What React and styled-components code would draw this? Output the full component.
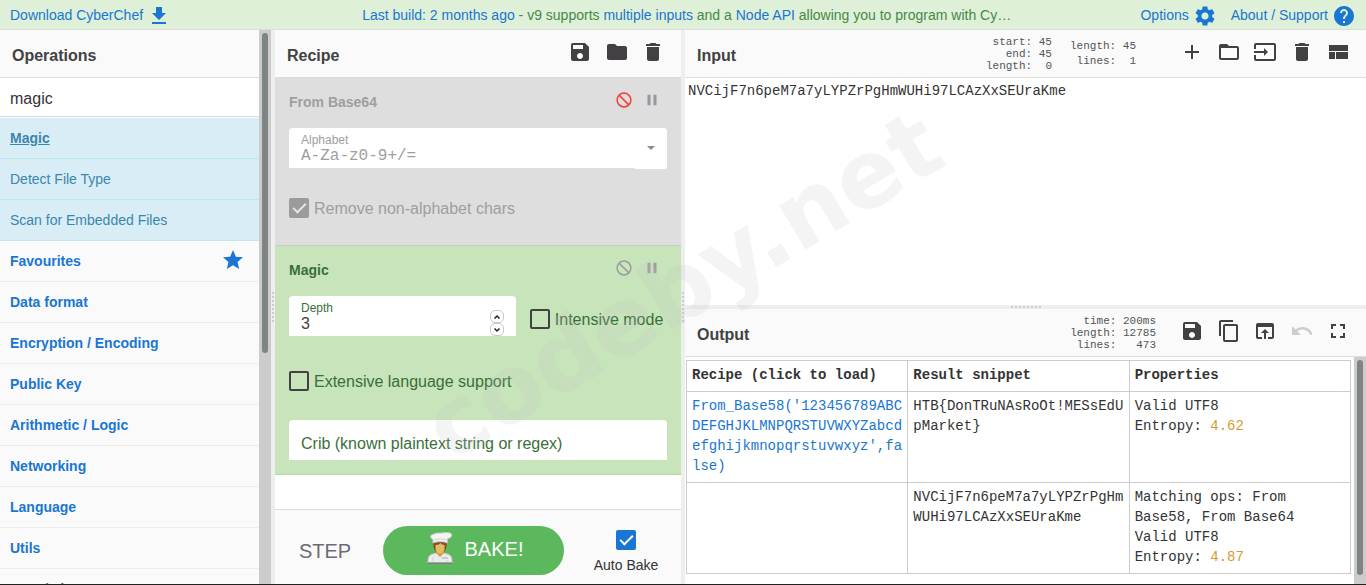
import { useState } from 'react';
import styled, { createGlobalStyle } from 'styled-components';
import { MdSettings, MdHelp, MdStar } from 'react-icons/md';

const GlobalStyle = createGlobalStyle`
  *,
  *::before {
    box-sizing: border-box;
  }
  body {
    margin: 0;
    overflow: hidden;
    font-family: 'Liberation Sans', Arial, sans-serif;
    font-size: 14px;
    line-height: 20px;
    color: #424242;
    background: #fff;
  }
  button, input, textarea {
    margin: 0;
    font: inherit;
    color: inherit;
  }
`;

const MONO = "'Liberation Mono', 'Courier New', monospace";

// Toolbar icon shapes, 24x24 grid
const PATHS = {
  download: 'M19 9h-4V3H9v6H5l7 7 7-7zM5 18v2h14v-2H5z',
  save: 'M17 3H5a2 2 0 0 0-2 2v14a2 2 0 0 0 2 2h14c1.1 0 2-.9 2-2V7l-4-4zm-5 16c-1.66 0-3-1.34-3-3s1.34-3 3-3 3 1.34 3 3-1.34 3-3 3zm3-10H5V5h10v4z',
  folder: 'M10 4H4c-1.1 0-1.99.9-1.99 2L2 18c0 1.1.9 2 2 2h16c1.1 0 2-.9 2-2V8c0-1.1-.9-2-2-2h-8l-2-2z',
  trash: 'M6 19c0 1.1.9 2 2 2h8c1.1 0 2-.9 2-2V7H6v12zM19 4h-3.5l-1-1h-5l-1 1H5v2h14V4z',
  add: 'M19 13h-6v6h-2v-6H5v-2h6V5h2v6h6v2z',
  folderOpen: 'M20 6h-8l-2-2H4c-1.1 0-1.99.9-1.99 2L2 18c0 1.1.9 2 2 2h16c1.1 0 2-.9 2-2V8c0-1.1-.9-2-2-2zm0 12H4V8h16v10z',
  input: 'M21 3.01H3c-1.1 0-2 .9-2 2V9h2V4.99h18v14.03H3V15H1v4.01c0 1.1.9 1.98 2 1.98h18c1.1 0 2-.88 2-1.98v-14c0-1.11-.9-2-2-2zM11 16l4-4-4-4v3H1v2h10v3z',
  layout: 'M3 19h6v-7H3v7zm7 0h12v-7H10v7zM3 5v6h19V5H3z',
  copy: 'M16 1H4c-1.1 0-2 .9-2 2v14h2V3h12V1zm3 4H8c-1.1 0-2 .9-2 2v14c0 1.1.9 2 2 2h11c1.1 0 2-.9 2-2V7c0-1.1-.9-2-2-2zm0 16H8V7h11v14z',
  openBrowser: 'M19 4H5c-1.11 0-2 .9-2 2v12c0 1.1.89 2 2 2h4v-2H5V8h14v10h-4v2h4c1.1 0 2-.9 2-2V6c0-1.1-.89-2-2-2zm-7 6l-4 4h3v6h2v-6h3l-4-4z',
  undo: 'M12.5 8c-2.65 0-5.05.99-6.9 2.6L2 7v9h9l-3.62-3.62c1.39-1.16 3.16-1.88 5.12-1.88 3.54 0 6.55 2.31 7.6 5.5l2.37-.78C21.08 11.03 17.15 8 12.5 8z',
  fullscreen: 'M7 14H5v5h5v-2H7v-3zm-2-4h2V7h3V5H5v5zm12 7h-3v2h5v-5h-2v3zM14 5v2h3v3h2V5h-5z',
  pause: 'M6 19h4V5H6v14zm8-14v14h4V5h-4z',
};

const Icon = ({ name, size = 24 }) => (
  <svg width={size} height={size} viewBox="0 0 24 24" fill="currentColor" aria-hidden="true">
    <path d={PATHS[name]} />
  </svg>
);

const BanIcon = () => (
  <svg width="18" height="18" viewBox="0 0 24 24" fill="none" stroke="currentColor" strokeWidth="2" aria-hidden="true">
    <circle cx="12" cy="12" r="9.2" />
    <path d="M5.5 5.5l13 13" />
  </svg>
);

const ChefIcon = () => (
  <svg width="26" height="33" viewBox="0 0 26 33" aria-hidden="true">
    <path d="M1 31c0-6 1-8 5-9l4-1h6l4 1c4 1 5 3 5 9z" fill="#ececee" stroke="#cfcfd2" />
    <path d="M1 30.5h24V32H1z" fill="#777d80" />
    <path d="M9 19v2l4 4 4-4v-2z" fill="#d09c40" />
    <path d="M6 10h14l-1 7-2 3H9l-2-3z" fill="#8a4a1e" />
    <path d="M8.500 13c3 0 4-1 5-2 1 1 2 2 4 2v4c0 2.500-2 4.700-4.500 4.700S8.500 19.500 8.500 17z" fill="#e3ba64" />
    <path d="M6 11V7.500C2.500 6 3 2.500 6.500 2.200 9 .6 12 1 15 1c4-.8 8-.5 9.500.8 1 2.200-1 4.500-4 5V11c-4-1.800-10-1.800-14.500 0z" fill="#f4f4f4" stroke="#c4c4c4" />
    <path d="M7 8c4-1.200 9-1.200 13 0" stroke="#cfcfcf" fill="none" />
    <path d="M15 26h6" stroke="#aaaab0" />
    <path d="M6 25v5M20 28v2" stroke="#d3d3d6" />
  </svg>
);

/* ---------- Page frame ---------- */

const Page = styled.div`
  display: flex;
  flex-direction: column;
  height: 100vh;
  border-bottom: 1px solid #222;
  position: relative;
  overflow: hidden;
`;

const Banner = styled.header`
  display: grid;
  grid-template-columns: 26fr 49fr 25fr;
  flex: none;
  height: 30px;
  padding-top: 4px;
  line-height: 22px;
  background: #dff0d8;
  border-bottom: 1px solid #ddd;
  color: #468847;
`;

const BannerLink = styled.a`
  display: flex;
  gap: 4px;
  color: #1976d2;
  text-decoration: none;

  svg {
    width: 24px;
    height: 24px;
  }
`;

const BannerSide = styled.div`
  display: flex;
  justify-content: ${({ $end }) => ($end ? 'flex-end' : 'flex-start')};
  gap: 14px;
  padding: 0 10px;
`;

const BannerNotice = styled.div`
  padding: 0 7px;
  text-align: center;
  white-space: nowrap;
  overflow: hidden;
  text-overflow: ellipsis;

  a {
    color: #1976d2;
    text-decoration: none;
  }
`;

const Workspace = styled.main`
  display: grid;
  grid-template-columns: minmax(0, 271fr) 4px minmax(0, 406fr) 4px minmax(0, 681fr);
  flex: 1;
  min-height: 0;
`;

const Gutter = styled.div`
  display: flex;
  align-items: center;
  justify-content: center;
  background: #eee;

  &::before {
    content: '';
    width: ${({ $horizontal }) => ($horizontal ? '30px' : '2px')};
    height: ${({ $horizontal }) => ($horizontal ? '2px' : '30px')};
    background: repeating-linear-gradient(
      ${({ $horizontal }) => ($horizontal ? '90deg' : '180deg')},
      #ccc 0 2px,
      transparent 2px 4px
    );
  }
`;

const PanelTitle = styled.div`
  display: flex;
  justify-content: space-between;
  flex: none;
  height: 48px;
  padding: 10px 16px 0 12px;
  background: #fafafa;
  border-bottom: 1px solid #ddd;
`;

const Heading = styled.h2`
  flex: 1;
  margin: 0;
  padding-top: 6px;
  font-size: 16px;
  line-height: 20px;
`;

const Toolbar = styled.div`
  display: flex;
  justify-content: space-between;
  width: ${({ $short }) => ($short ? '97px' : '170px')};
`;

const IconButton = styled.button`
  display: flex;
  padding: 0;
  height: 24px;
  border: 0;
  background: none;
  color: ${({ $color }) => $color || '#424042'};

  &:disabled {
    color: #ccc;
  }
`;

const Track = styled.div`
  flex: none;
  width: 12px;
  padding: 3px;
  background: #ccc;
`;

const Thumb = styled.div`
  height: ${({ $size }) => $size};
  border-radius: 3px;
  background: #7f8485;
`;

/* ---------- Operations ---------- */

const OperationsPanel = styled.section`
  display: flex;
  min-height: 0;
`;

const OperationsBody = styled.div`
  flex: 1;
  min-width: 0;
  overflow: hidden;
  background: #fafafa;
`;

const Search = styled.input`
  display: block;
  width: 100%;
  height: 39px;
  padding: 4px 10px 0;
  border: 0;
  border-bottom: 1px solid #ddd;
  outline: 0;
  background: #fff;
  font-size: 16px;
  color: #333;
`;

const List = styled.ul`
  margin: 0;
  padding: ${({ $results }) => ($results ? '1px 0 0' : '0')};
  list-style: none;
`;

const Result = styled.li`
  height: 41px;
  padding: 10px;
  background: #d9edf7;
  border-bottom: 1px solid #bce8f1;
  color: #3a87ad;

  b {
    text-decoration: underline;
  }
`;

const Category = styled.li`
  height: 41px;
  border-bottom: 1px solid #eee;

  a {
    display: flex;
    align-items: center;
    justify-content: space-between;
    height: 40px;
    padding: 0 14px 0 10px;
    color: #1976d2;
    font-weight: bold;
    text-decoration: none;
  }

  svg {
    margin-bottom: 2px;
  }
`;

/* ---------- Recipe ---------- */

const Column = styled.section`
  display: flex;
  flex-direction: column;
  min-height: 0;
  min-width: 0;
`;

const RecipeList = styled.div`
  flex: 1;
  min-height: 0;
  overflow: hidden;
`;

const Operation = styled.article`
  padding: 14px;
  padding-bottom: ${({ $disabled }) => ($disabled ? '25px' : '14px')};
  background: ${({ $disabled }) => ($disabled ? '#dedede' : '#c8e4ba')};
  border-bottom: 1px solid ${({ $disabled }) => ($disabled ? '#c6cfc1' : '#b3dba2')};
  color: ${({ $disabled }) => ($disabled ? '#9e9e9e' : '#396f3a')};
`;

const OperationHead = styled.div`
  display: flex;
  height: 20px;
  gap: 10px;
  padding-right: 6px;

  h3 {
    flex: 1;
    margin: 0;
    font-size: 14px;
  }

  button {
    height: 18px;
    margin-top: -1px;
  }
`;

const Args = styled.div`
  display: flex;
  align-items: flex-start;
  gap: 14px;
  margin-top: ${({ $gap }) => $gap}px;
`;

const Field = styled.div`
  display: flex;
  width: ${({ $narrow }) => ($narrow ? '60%' : '100%')};
  height: 40px;
  border-radius: 4px 4px 0 0;
  background: #fff;
`;

const FieldText = styled.div`
  display: flex;
  flex-direction: column;
  flex: 1;
  min-width: 0;
  padding: 5px 12px 0;

  label {
    font-size: 12px;
    line-height: 15px;
  }

  input {
    width: 100%;
    height: 16px;
    padding: 0;
    border: 0;
    outline: 0;
    background: none;
    font-family: ${({ $mono }) => ($mono ? MONO : 'inherit')};
    font-size: 16px;
    line-height: 16px;
    color: ${({ $mono }) => ($mono ? 'inherit' : '#424242')};
    appearance: textfield;
  }

  input::-webkit-inner-spin-button {
    display: none;
  }
`;

const CribInput = styled.input`
  width: 100%;
  padding: 8px 12px 0;
  border: 0;
  outline: 0;
  background: none;
  font-size: 16px;

  &::placeholder {
    color: #396f3a;
    opacity: 1;
  }
`;

const DropButton = styled.button`
  display: flex;
  align-items: center;
  justify-content: center;
  width: 32px;
  height: 41px;
  padding: 0 0 2px;
  border: 0;
  border-radius: 0 4px 2px 0;
  background: #fff;

  &::before {
    content: '';
    border: 4px solid transparent;
    border-top-color: #8c8c8c;
    border-bottom: 0;
  }
`;

const Stepper = styled.div`
  display: flex;
  flex-direction: column;
  align-self: flex-end;
  margin-right: 12px;
`;

const StepperButton = styled.button`
  display: flex;
  align-items: center;
  justify-content: center;
  width: 14px;
  height: 13px;
  padding: 0;
  border: 1px solid #cfc5c8;
  border-radius: 5px;
  background: #fff;
  color: #222;
`;

const Check = styled.label`
  display: flex;
  gap: 5px;
  font-size: 16px;
  line-height: 22px;
  white-space: nowrap;
`;

// Sits beside a field, level with the field's value
const SideCheck = styled(Check)`
  padding-top: 13px;
`;

const CheckBox = styled.input`
  display: flex;
  align-items: flex-start;
  justify-content: center;
  flex: none;
  width: 20px;
  height: 20px;
  appearance: none;
  border: 2px solid #424242;
  border-radius: 2px;

  &:checked {
    border-color: ${({ $color }) => $color || '#424242'};
    background: ${({ $color }) => $color || '#424242'};
  }

  &:checked::before {
    content: '';
    width: 7px;
    height: 13px;
    border: solid ${({ $tick }) => $tick || '#fff'};
    border-width: 0 2px 2px 0;
    transform: rotate(45deg);
  }
`;

const Controls = styled.footer`
  display: grid;
  grid-template-columns: 100fr 181fr 109fr;
  gap: 8px;
  flex: none;
  height: 75px;
  padding: 16px 0 9px;
  background: #fafafa;
  border-top: 1px solid #ddd;
`;

const StepButton = styled.button`
  padding: 0;
  border: 0;
  background: none;
  font-size: 20px;
  color: #6c6a78;
`;

const BakeButton = styled.button`
  display: flex;
  align-items: center;
  justify-content: center;
  gap: 12px;
  padding: 0 0 4px 3px;
  border: 0;
  border-radius: 25px;
  background: #5cb85c;
  font-size: 20px;
  color: #fff;
`;

const AutoBake = styled.label`
  display: flex;
  flex-direction: column;
  align-items: center;
  gap: 5px;
  padding: 4px 1px 0 0;
  color: #333;
`;

/* ---------- Input / output ---------- */

const IoPanel = styled.div`
  display: grid;
  grid-template-rows: minmax(0, 1fr) 4px minmax(0, 1fr);
  min-height: 0;
`;

const Info = styled.pre`
  margin: -4px 18px 0 0;
  font-family: ${MONO};
  font-size: 11px;
  line-height: 12px;
  text-align: right;
  color: #555;
`;

const InputLengthInfo = styled(Info)`
  margin: -1px 44px 0 0;
  line-height: 15px;
`;

const OutputInfo = styled(Info)`
  margin-right: 24px;
`;

const InputText = styled.textarea`
  flex: 1;
  width: 100%;
  padding: 3px;
  border: 0;
  outline: 0;
  resize: none;
  font-family: ${MONO};
  font-size: 14px;
  line-height: 20px;
  color: #333;
`;

const OutputBody = styled.div`
  display: flex;
  flex: 1;
  min-height: 0;
`;

const OutputView = styled.div`
  flex: 1;
  min-width: 0;
  padding: 3px 3px 0 1px;
  overflow: hidden;
`;

const ResultTable = styled.table`
  width: 100%;
  table-layout: fixed;
  border-collapse: collapse;
  font-family: ${MONO};
  color: #333;

  th,
  td {
    padding: 4px 5px 6px;
    border: 1px solid #ccc;
    text-align: left;
    vertical-align: top;
    overflow-wrap: anywhere;
  }

  a {
    color: #1976d2;
    text-decoration: none;
    word-break: break-all;
  }
`;

const Entropy = styled.span`
  color: #d69a34;
`;

const Watermark = styled.div`
  position: absolute;
  left: 50%;
  top: 49%;
  transform: translate(-50%, -50%) rotate(-31deg);
  font-family: 'DejaVu Sans', sans-serif;
  font-size: 94px;
  font-weight: bold;
  line-height: 1;
  color: rgba(196, 196, 200, 0.18);
  pointer-events: none;
`;

const CATEGORIES = [
  'Favourites',
  'Data format',
  'Encryption / Encoding',
  'Public Key',
  'Arithmetic / Logic',
  'Networking',
  'Language',
  'Utils',
  'Date / Time',
];

const ToolButton = ({ icon, label, ...rest }) => (
  <IconButton type="button" aria-label={label} {...rest}>
    <Icon name={icon} />
  </IconButton>
);

const Operations = () => {
  const [query, setQuery] = useState('magic');

  return (
    <OperationsPanel>
      <OperationsBody>
        <PanelTitle>
          <Heading>Operations</Heading>
        </PanelTitle>
        <Search aria-label="Search operations" value={query} onChange={(e) => setQuery(e.target.value)} />
        <List $results>
          <Result><b>Magic</b></Result>
          <Result>Detect File Type</Result>
          <Result>Scan for Embedded Files</Result>
        </List>
        <List>
          {CATEGORIES.map((name) => (
            <Category key={name}>
              <a href="#category">
                {name}
                {name === 'Favourites' && <MdStar size={24} />}
              </a>
            </Category>
          ))}
        </List>
      </OperationsBody>
      <Track>
        <Thumb $size="320px" />
      </Track>
    </OperationsPanel>
  );
};

const OperationTitle = ({ title, disabled }) => (
  <OperationHead>
    <h3>{title}</h3>
    <IconButton type="button" aria-label="Disable operation" $color={disabled ? '#f44336' : '#9e9e9e'}>
      <BanIcon />
    </IconButton>
    <IconButton type="button" aria-label="Set breakpoint" $color={disabled ? '#94999f' : '#9e9e9e'}>
      <Icon name="pause" size={18} />
    </IconButton>
  </OperationHead>
);

const Recipe = () => {
  const [depth, setDepth] = useState(3);

  return (
    <Column>
      <PanelTitle>
        <Heading>Recipe</Heading>
        <Toolbar $short>
          <ToolButton icon="save" label="Save recipe" />
          <ToolButton icon="folder" label="Load recipe" />
          <ToolButton icon="trash" label="Clear recipe" />
        </Toolbar>
      </PanelTitle>

      <RecipeList>
        <Operation $disabled>
          <OperationTitle title="From Base64" disabled />
          <Args $gap={16}>
            <Field>
              <FieldText $mono>
                <label htmlFor="alphabet">Alphabet</label>
                <input id="alphabet" defaultValue="A-Za-z0-9+/=" />
              </FieldText>
              <DropButton type="button" aria-label="Choose alphabet" />
            </Field>
          </Args>
          <Args $gap={30}>
            <Check>
              <CheckBox type="checkbox" defaultChecked $color="#9b9b9b" $tick="#e6e6e6" />
              Remove non-alphabet chars
            </Check>
          </Args>
        </Operation>

        <Operation>
          <OperationTitle title="Magic" />
          <Args $gap={16}>
            <Field $narrow>
              <FieldText>
                <label htmlFor="depth">Depth</label>
                <input id="depth" type="number" value={depth} onChange={(e) => setDepth(Number(e.target.value))} />
              </FieldText>
              <Stepper>
                <StepperButton type="button" aria-label="Increase depth" onClick={() => setDepth(depth + 1)}>
                  <svg width="8" height="6" viewBox="0 0 8 6" fill="none" stroke="currentColor" strokeWidth="1.500">
                    <path d="M1.500 4.500L4 2l2.500 2.500" />
                  </svg>
                </StepperButton>
                <StepperButton type="button" aria-label="Decrease depth" onClick={() => setDepth(depth - 1)}>
                  <svg width="8" height="6" viewBox="0 0 8 6" fill="none" stroke="currentColor" strokeWidth="1.500">
                    <path d="M1.500 1.500L4 4l2.500-2.500" />
                  </svg>
                </StepperButton>
              </Stepper>
            </Field>
            <SideCheck>
              <CheckBox type="checkbox" />
              Intensive mode
            </SideCheck>
          </Args>
          <Args $gap={35}>
            <Check>
              <CheckBox type="checkbox" />
              Extensive language support
            </Check>
          </Args>
          <Args $gap={27}>
            <Field>
              <CribInput
                aria-label="Crib (known plaintext string or regex)"
                placeholder="Crib (known plaintext string or regex)"
              />
            </Field>
          </Args>
        </Operation>
      </RecipeList>

      <Controls>
        <StepButton type="button">STEP</StepButton>
        <BakeButton type="button">
          <ChefIcon />
          BAKE!
        </BakeButton>
        <AutoBake>
          <CheckBox type="checkbox" defaultChecked $color="#1976d2" />
          Auto Bake
        </AutoBake>
      </Controls>
    </Column>
  );
};

const Input = () => (
  <Column>
    <PanelTitle>
      <Heading>Input</Heading>
      <Info>{'start: 45\nend: 45\nlength:  0'}</Info>
      <InputLengthInfo>{'length: 45\nlines:  1'}</InputLengthInfo>
      <Toolbar>
        <ToolButton icon="add" label="Add a new input tab" />
        <ToolButton icon="folderOpen" label="Open folder as input" />
        <ToolButton icon="input" label="Open file as input" />
        <ToolButton icon="trash" label="Clear input and output" />
        <ToolButton icon="layout" label="Reset pane layout" />
      </Toolbar>
    </PanelTitle>
    <InputText
      aria-label="Input"
      spellCheck={false}
      defaultValue="NVCijF7n6peM7a7yLYPZrPgHmWUHi97LCAzXxSEUraKme"
    />
  </Column>
);

const Output = () => (
  <Column>
    <PanelTitle>
      <Heading>Output</Heading>
      <OutputInfo>{'time: 200ms\nlength: 12785\nlines:   473'}</OutputInfo>
      <Toolbar>
        <ToolButton icon="save" label="Save output to file" />
        <ToolButton icon="copy" label="Copy output" />
        <ToolButton icon="openBrowser" label="Replace input with output" />
        <ToolButton icon="undo" label="Undo" disabled />
        <ToolButton icon="fullscreen" label="Maximise output" />
      </Toolbar>
    </PanelTitle>
    <OutputBody>
      <OutputView>
        <ResultTable>
          <thead>
            <tr>
              <th>Recipe (click to load)</th>
              <th>Result snippet</th>
              <th>Properties</th>
            </tr>
          </thead>
          <tbody>
            <tr>
              <td>
                <a href="#recipe">
                  From_Base58('123456789ABCDEFGHJKLMNPQRSTUVWXYZabcdefghijkmnopqrstuvwxyz',false)
                </a>
              </td>
              <td>{'HTB{DonTRuNAsRoOt!MESsEdUpMarket}'}</td>
              <td>
                Valid UTF8
                <br />
                Entropy: <Entropy>4.62</Entropy>
              </td>
            </tr>
            <tr>
              <td />
              <td>NVCijF7n6peM7a7yLYPZrPgHmWUHi97LCAzXxSEUraKme</td>
              <td>
                Matching ops: From Base58, From Base64
                <br />
                Valid UTF8
                <br />
                Entropy: <Entropy>4.87</Entropy>
              </td>
            </tr>
          </tbody>
        </ResultTable>
      </OutputView>
      <Track>
        <Thumb $size="215px" />
      </Track>
    </OutputBody>
  </Column>
);

const App = () => (
  <>
    <GlobalStyle />
    <Page>
      <Banner>
        <BannerSide>
          <BannerLink href="#download">
            Download CyberChef
            <Icon name="download" />
          </BannerLink>
        </BannerSide>
        <BannerNotice>
          <a href="#build">Last build: 2 months ago</a> - v9 supports <a href="#inputs">multiple inputs</a> and a{' '}
          <a href="#node">Node API</a> allowing you to program with CyberChef!
        </BannerNotice>
        <BannerSide $end>
          <BannerLink href="#options">
            Options
            <MdSettings />
          </BannerLink>
          <BannerLink href="#support">
            About / Support
            <MdHelp />
          </BannerLink>
        </BannerSide>
      </Banner>

      <Workspace>
        <Operations />
        <Gutter />
        <Recipe />
        <Gutter />
        <IoPanel>
          <Input />
          <Gutter $horizontal />
          <Output />
        </IoPanel>
      </Workspace>

      <Watermark aria-hidden="true">codeby.net</Watermark>
    </Page>
  </>
);

export default App;
